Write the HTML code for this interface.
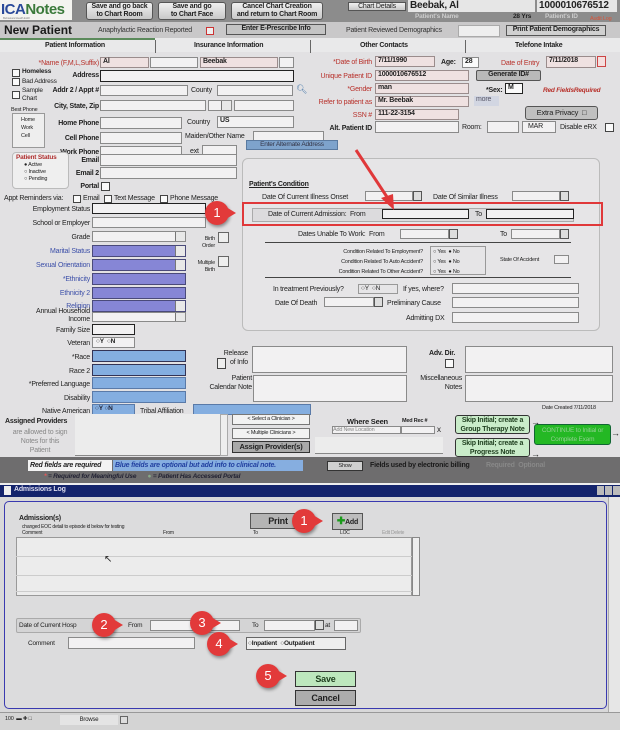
<!DOCTYPE html>
<html><head><meta charset="utf-8"><style>
*{box-sizing:border-box;margin:0;padding:0}
body{width:620px;height:730px;overflow:hidden;position:relative;background:#e2e1e3;font-family:"Liberation Sans",Arial,sans-serif;font-size:7px;letter-spacing:-0.2px;color:#222}
.a{position:absolute;white-space:nowrap}
.r{text-align:right}
.b{font-weight:bold}
.red{color:#b8312b}
.blu{color:#3c4fa8}
.in{position:absolute;background:#f2f1f2;border:1px solid #8a8a8a}
.dk{border:1px solid #222}
.pk{position:absolute;background:#efe1e1;border:1px solid #9a8c8c}
.pu{position:absolute;background:#8686d6;border:1px solid #4a4a7a}
.bl{position:absolute;background:#84aee0;border:1px solid #5a7aa8}
.btn{position:absolute;background:linear-gradient(#f0f0f0,#c8c8c8);border:1px solid #555;border-radius:3px;text-align:center;font-weight:bold;font-size:7px;line-height:8px;white-space:nowrap}
.cb{position:absolute;width:8px;height:8px;background:#fafafa;border:1px solid #444}
.sel:after{content:"";position:absolute;right:0;top:0;bottom:0;width:9px;border-left:1px solid #777;background:#e8e8e8}
.cal{position:absolute;width:9px;height:10px;border:1px solid #555;background:#ddd}
.badge{position:absolute;width:24px;height:24px;border-radius:50%;background:#e23a3a;color:#fff;font-size:13px;text-align:center;line-height:24px;box-shadow:1px 2px 3px rgba(0,0,0,.4);letter-spacing:0}
.badge:after{content:"";position:absolute;right:-7px;top:6px;border-left:10px solid #e23a3a;border-top:6px solid transparent;border-bottom:6px solid transparent}
.gbtn{position:absolute;background:#c9ecc9;border:1px solid #333;border-radius:3px;text-align:center;font-weight:bold;font-size:7px;line-height:9px;color:#1d3d1d;white-space:nowrap}
</style></head><body>

<!-- top bar -->
<div class="a" style="left:0;top:0;width:620px;height:22px;background:#8c8c8c"></div>
<div class="a" style="left:0;top:0;width:72px;height:20px;background:#f4f4f0"></div>
<div class="a b" style="left:1px;top:1px;font-size:15px;color:#3b7a3b;letter-spacing:-0.5px"><span style="color:#2a4a9a">ICA</span>Notes</div>
<div class="a" style="left:3px;top:16px;font-size:3px;color:#888">Behavioral Health EHR</div>
<div class="btn" style="left:86px;top:2px;width:67px;height:18px">Save and go back<br>to Chart Room</div>
<div class="btn" style="left:158px;top:2px;width:68px;height:18px">Save and go<br>to Chart Face</div>
<div class="btn" style="left:231px;top:2px;width:92px;height:18px">Cancel Chart Creation<br>and return to Chart Room</div>
<div class="btn" style="left:348px;top:2px;width:58px;height:9px;font-weight:normal;line-height:7px;border-radius:0">Chart Details</div>
<div class="a b" style="left:408px;top:0;width:127px;height:12px;background:#e6e6e6;font-size:10px;padding-left:2px;line-height:12px">Beebak, Al</div>
<div class="a b" style="left:537px;top:0;width:80px;height:12px;background:#e6e6e6;font-size:10px;padding-left:2px;line-height:12px">1000010676512</div>
<div class="a b" style="left:415px;top:13px;color:#ccc;font-size:6.5px">Patient's Name</div>
<div class="a b" style="left:513px;top:13px;font-size:6.5px">28 Yrs</div>
<div class="a b" style="left:545px;top:13px;color:#ccc;font-size:6.5px">Patient's ID</div>
<div class="a" style="left:590px;top:16px;color:#d9553a;font-size:5.5px">Audit Log</div>

<!-- row 2 -->
<div class="a" style="left:0;top:22px;width:620px;height:16px;background:#c9c8c9"></div>
<div class="a b" style="left:4px;top:23px;font-size:12px;color:#1a1a1a;letter-spacing:0">New Patient</div>
<div class="a" style="left:98px;top:27px;color:#333">Anaphylactic Reaction Reported</div>
<div class="a" style="left:206px;top:27px;width:8px;height:8px;border:1px solid #c33;background:#eee"></div>
<div class="btn" style="left:226px;top:24px;width:100px;height:11px;border-radius:0;background:#c4c4c4">Enter E-Prescribe Info</div>
<div class="a" style="left:346px;top:27px;color:#333">Patient Reviewed Demographics</div>
<div class="a" style="left:458px;top:25px;width:42px;height:12px;background:#eee;border:1px solid #aaa"></div>
<div class="btn" style="left:506px;top:25px;width:100px;height:11px;border-radius:0;background:#d0d0d0">Print Patient Demographics</div>

<!-- tabs -->
<div class="a" style="left:0;top:38px;width:620px;height:14px;background:#e9e9ea"></div>
<div class="a" style="left:0;top:38px;width:155px;height:2px;background:#5b8a5b"></div>
<div class="a" style="left:155px;top:40px;width:1px;height:13px;background:#666"></div>
<div class="a" style="left:310px;top:40px;width:1px;height:13px;background:#666"></div>
<div class="a" style="left:465px;top:40px;width:1px;height:13px;background:#666"></div>
<div class="a b" style="left:45px;top:42px">Patient Information</div>
<div class="a b" style="left:194px;top:42px">Insurance Information</div>
<div class="a b" style="left:360px;top:42px">Other Contacts</div>
<div class="a b" style="left:515px;top:42px">Telefone Intake</div>

<!-- left column -->
<div class="a r red" style="left:0;top:60px;width:99px">*Name (F,M,L,Suffix)</div>
<div class="pk" style="left:100px;top:57px;width:49px;height:11px"><span class="b" style="padding-left:2px">Al</span></div>
<div class="in" style="left:150px;top:57px;width:48px;height:11px"></div>
<div class="pk" style="left:200px;top:57px;width:78px;height:11px"><span class="b" style="padding-left:2px">Beebak</span></div>
<div class="in" style="left:279px;top:57px;width:15px;height:11px"></div>
<div class="cb" style="left:12px;top:69px"></div><div class="a b" style="left:22px;top:68px;font-size:6.5px">Homeless</div>
<div class="cb" style="left:12px;top:78px"></div><div class="a" style="left:22px;top:78px;font-size:6.5px">Bad Address</div>
<div class="a r b" style="left:0;top:72px;width:99px">Address</div>
<div class="in dk" style="left:100px;top:70px;width:194px;height:12px"></div>
<div class="cb" style="left:12px;top:91px"></div><div class="a" style="left:22px;top:87px;font-size:6.5px;line-height:8px">Sample<br>Chart</div>
<div class="a r b" style="left:0;top:87px;width:99px">Addr 2 / Appt #</div>
<div class="in" style="left:100px;top:85px;width:88px;height:11px"></div>
<div class="a" style="left:191px;top:87px">County</div>
<div class="in" style="left:217px;top:85px;width:76px;height:11px"></div>
<div class="a" style="left:296px;top:84px;color:#47a;font-size:9px">&#x1F50D;&#xFE0E;</div>
<div class="a" style="left:11px;top:107px;font-size:5.5px">Best Phone</div>
<div class="a" style="left:12px;top:113px;width:33px;height:35px;border:1px solid #999;background:#eee;font-size:5.5px;line-height:8px;padding:2px 0 0 8px">Home<br>Work<br>Cell</div>
<div class="a r b" style="left:0;top:103px;width:99px">City, State, Zip</div>
<div class="in" style="left:100px;top:100px;width:106px;height:11px"></div>
<div class="in sel" style="left:208px;top:100px;width:24px;height:11px"></div>
<div class="in" style="left:234px;top:100px;width:60px;height:11px"></div>
<div class="a r b" style="left:0;top:120px;width:99px">Home Phone</div>
<div class="in" style="left:100px;top:117px;width:82px;height:12px"></div>
<div class="a" style="left:187px;top:119px">Country</div>
<div class="in" style="left:217px;top:116px;width:77px;height:12px"><span class="b" style="padding-left:2px">US</span></div>
<div class="a r b" style="left:0;top:135px;width:99px">Cell Phone</div>
<div class="in" style="left:100px;top:132px;width:82px;height:12px"></div>
<div class="a" style="left:185px;top:133px">Maiden/Other Name</div>
<div class="in" style="left:253px;top:131px;width:71px;height:12px"></div>
<div class="a r b" style="left:0;top:149px;width:99px">Work Phone</div>
<div class="in" style="left:100px;top:146px;width:82px;height:12px"></div>
<div class="a" style="left:190px;top:148px">ext</div>
<div class="in" style="left:202px;top:145px;width:35px;height:12px"></div>
<div class="a" style="left:246px;top:140px;width:92px;height:10px;background:#7ea3cc;border:1px solid #5a7aa0;font-size:6.5px;text-align:center;line-height:8px;color:#334">Enter Alternate Address</div>
<div class="a" style="left:12px;top:152px;width:57px;height:37px;border:1px solid #bbb;border-radius:4px;background:#efefef"></div>
<div class="a b" style="left:16px;top:154px;color:#b03030;font-size:6.5px">Patient Status</div>
<div class="a" style="left:24px;top:162px;font-size:5.5px;line-height:7px">&#9679; Active<br>&#9675; Inactive<br>&#9675; Pending</div>
<div class="a r b" style="left:0;top:157px;width:99px">Email</div>
<div class="in" style="left:100px;top:154px;width:137px;height:12px"></div>
<div class="a r b" style="left:0;top:170px;width:99px">Email 2</div>
<div class="in" style="left:100px;top:167px;width:137px;height:12px"></div>
<div class="a r b" style="left:0;top:183px;width:99px">Portal</div>
<div class="cb" style="left:101px;top:182px;width:9px;height:9px"></div>
<div class="a" style="left:4px;top:195px">Appt Reminders via:</div>
<div class="cb" style="left:73px;top:195px"></div><div class="a" style="left:83px;top:195px">Email</div>
<div class="cb" style="left:104px;top:195px"></div><div class="a" style="left:114px;top:195px">Text Message</div>
<div class="cb" style="left:160px;top:195px"></div><div class="a" style="left:170px;top:195px">Phone Message</div>

<div class="a r" style="left:0;top:206px;width:90px">Employment Status</div>
<div class="in dk" style="left:92px;top:203px;width:114px;height:11px"></div>
<div class="a r" style="left:0;top:220px;width:90px">School or Employer</div>
<div class="in" style="left:92px;top:217px;width:114px;height:11px"></div>
<div class="a r" style="left:0;top:234px;width:90px">Grade</div>
<div class="in sel" style="left:92px;top:231px;width:94px;height:11px"></div>
<div class="a r" style="left:190px;top:236px;width:25px;font-size:5.5px;line-height:7px">Birth<br>Order</div>
<div class="a" style="left:218px;top:232px;width:11px;height:11px;border:1px solid #666;background:#eee"></div>
<div class="a r blu" style="left:0;top:248px;width:90px">Marital Status</div>
<div class="pu sel" style="left:92px;top:245px;width:94px;height:12px"></div>
<div class="a r blu" style="left:0;top:262px;width:90px">Sexual Orientation</div>
<div class="pu sel" style="left:92px;top:259px;width:94px;height:12px"></div>
<div class="a r" style="left:190px;top:260px;width:25px;font-size:5.5px;line-height:7px">Multiple<br>Birth</div>
<div class="a" style="left:218px;top:256px;width:11px;height:11px;border:1px solid #666;background:#eee"></div>
<div class="a r blu" style="left:0;top:276px;width:90px">*Ethnicity</div>
<div class="pu" style="left:92px;top:273px;width:94px;height:12px"></div>
<div class="a r blu" style="left:0;top:290px;width:90px">Ethnicity 2</div>
<div class="pu" style="left:92px;top:287px;width:94px;height:12px"></div>
<div class="a r blu" style="left:0;top:303px;width:90px">Religion</div>
<div class="pu sel" style="left:92px;top:300px;width:94px;height:12px"></div>
<div class="a r" style="left:0;top:308px;width:90px;line-height:8px">Annual Household<br>Income</div>
<div class="in sel" style="left:92px;top:312px;width:94px;height:10px"></div>
<div class="a r" style="left:0;top:327px;width:90px">Family Size</div>
<div class="in dk" style="left:92px;top:324px;width:43px;height:11px"></div>
<div class="a r" style="left:0;top:340px;width:90px">Veteran</div>
<div class="in" style="left:92px;top:337px;width:43px;height:11px;font-size:6.5px;font-weight:bold;padding-left:3px">&#9675;Y &nbsp;&#9675;N</div>
<div class="a r" style="left:0;top:354px;width:90px">*Race</div>
<div class="bl" style="left:92px;top:350px;width:94px;height:12px;border-color:#335"></div>
<div class="a r" style="left:0;top:368px;width:90px">Race 2</div>
<div class="bl" style="left:92px;top:364px;width:94px;height:12px;border-color:#335"></div>
<div class="a r" style="left:0;top:381px;width:90px">*Preferred Language</div>
<div class="bl" style="left:92px;top:377px;width:94px;height:12px"></div>
<div class="a r" style="left:0;top:395px;width:90px">Disability</div>
<div class="bl" style="left:92px;top:391px;width:94px;height:12px"></div>
<div class="a r" style="left:0;top:408px;width:90px">Native American</div>
<div class="bl" style="left:92px;top:404px;width:43px;height:11px;font-size:6.5px;font-weight:bold;padding-left:2px;color:#223">&#9675;Y &#9675;N</div>
<div class="a" style="left:140px;top:408px">Tribal Affiliation</div>
<div class="bl" style="left:193px;top:404px;width:118px;height:11px"></div>

<!-- right column -->
<div class="a r red" style="left:280px;top:59px;width:92px">*Date of Birth</div>
<div class="pk" style="left:375px;top:56px;width:60px;height:11px"><span class="b" style="padding-left:2px">7/11/1990</span></div>
<div class="a b" style="left:441px;top:59px">Age:</div>
<div class="in" style="left:462px;top:57px;width:17px;height:11px;background:#fafafa"><span class="b" style="padding-left:2px">28</span></div>
<div class="a red" style="left:501px;top:60px">Date of Entry</div>
<div class="pk" style="left:546px;top:56px;width:50px;height:12px"><span class="b" style="padding-left:2px">7/11/2018</span></div>
<div class="a" style="left:597px;top:56px;width:9px;height:11px;border:1px solid #c44;background:#f5dede"></div>
<div class="a r red" style="left:280px;top:73px;width:92px">Unique Patient ID</div>
<div class="pk" style="left:375px;top:70px;width:94px;height:11px"><span class="b" style="padding-left:2px">1000010676512</span></div>
<div class="btn" style="left:476px;top:70px;width:65px;height:11px;background:#b9b9b9;border-radius:2px">Generate ID#</div>
<div class="a r red" style="left:280px;top:86px;width:92px">*Gender</div>
<div class="pk" style="left:375px;top:83px;width:94px;height:11px"><span class="b" style="padding-left:2px">man</span></div>
<div class="a b" style="left:486px;top:87px">*Sex:</div>
<div class="in dk" style="left:505px;top:83px;width:18px;height:11px;background:#fafafa"><span class="b" style="padding-left:2px">M</span></div>
<div class="a red b" style="left:543px;top:87px;font-style:italic;font-size:6.5px">Red FieldsRequired</div>
<div class="a r red" style="left:280px;top:99px;width:92px">Refer to patient as</div>
<div class="pk" style="left:375px;top:96px;width:94px;height:11px"><span class="b" style="padding-left:2px">Mr. Beebak</span></div>
<div class="a" style="left:474px;top:96px;width:25px;height:10px;background:#d2d6e2;color:#556;padding-left:2px">more</div>
<div class="a r red" style="left:280px;top:112px;width:92px">SSN #</div>
<div class="pk" style="left:375px;top:109px;width:84px;height:11px"><span class="b" style="padding-left:2px">111-22-3154</span></div>
<div class="btn" style="left:525px;top:106px;width:73px;height:14px;background:#c0c0c0;font-weight:normal;line-height:12px;font-size:7.5px">Extra Privacy &nbsp;&#9633;</div>
<div class="a r b" style="left:280px;top:125px;width:92px">Alt. Patient ID</div>
<div class="in" style="left:375px;top:121px;width:84px;height:12px"></div>
<div class="a" style="left:462px;top:124px">Room:</div>
<div class="in" style="left:487px;top:121px;width:32px;height:12px"></div>
<div class="in" style="left:522px;top:121px;width:34px;height:12px;padding-left:5px;line-height:10px">MAR</div>
<div class="a" style="left:560px;top:124px">Disable eRX</div>
<div class="cb" style="left:605px;top:123px;width:9px;height:9px"></div>

<!-- patient's condition -->
<div class="a" style="left:242px;top:158px;width:358px;height:173px;border:1px solid #bbb;border-radius:6px;background:#e6e5e7"></div>
<div class="a b" style="left:249px;top:181px;text-decoration:underline">Patient's Condition</div>
<div class="a" style="left:262px;top:194px">Date Of Current Illness Onset</div>
<div class="in" style="left:365px;top:191px;width:48px;height:10px"></div><div class="cal" style="left:413px;top:191px"></div>
<div class="a" style="left:433px;top:194px">Date Of Similar Illness</div>
<div class="in" style="left:512px;top:191px;width:48px;height:10px"></div><div class="cal" style="left:560px;top:191px"></div>
<div class="a" style="left:252px;top:208px;width:322px;height:14px;border:1px solid #aaa;background:#dcdbdd"></div>
<div class="a" style="left:268px;top:211px">Date of Current Admission:&nbsp; From</div>
<div class="in" style="left:382px;top:209px;width:87px;height:10px;border:1.5px solid #222"></div>
<div class="a" style="left:475px;top:211px">To</div>
<div class="in" style="left:486px;top:209px;width:88px;height:10px;border:1.5px solid #222"></div>
<div class="a" style="left:242px;top:202px;width:361px;height:24px;border:2px solid #e0383a"></div>
<div class="a" style="left:298px;top:231px">Dates Unable To Work:&nbsp; From</div>
<div class="in" style="left:400px;top:229px;width:49px;height:10px"></div><div class="cal" style="left:449px;top:229px"></div>
<div class="a" style="left:500px;top:231px">To</div>
<div class="in" style="left:511px;top:229px;width:49px;height:10px"></div><div class="cal" style="left:560px;top:229px"></div>
<div class="a" style="left:265px;top:242px;width:306px;height:1px;background:#444"></div>
<div class="a r" style="left:300px;top:247px;width:123px;font-size:5.5px;line-height:10px">Condition Related To Employment?<br>Condition Related To Auto Accident?<br>Condition Related To Other Accident?</div>
<div class="a" style="left:430px;top:246px;width:56px;height:29px;border:1px solid #999;font-size:5.5px;line-height:10px;padding-left:2px">&#9675; Yes &nbsp;&#9679; No<br>&#9675; Yes &nbsp;&#9679; No<br>&#9675; Yes &nbsp;&#9679; No</div>
<div class="a" style="left:500px;top:257px;font-size:5.5px">State Of Accident</div>
<div class="in" style="left:554px;top:255px;width:15px;height:9px"></div>
<div class="a" style="left:265px;top:277px;width:306px;height:1px;background:#444"></div>
<div class="a" style="left:273px;top:286px">In treatment Previously?</div>
<div class="a" style="left:358px;top:284px;width:40px;height:10px;border:1px solid #999;font-size:6.5px;padding-left:2px">&#9675;Y &nbsp;&#9675;N</div>
<div class="a" style="left:403px;top:286px">If yes, where?</div>
<div class="in" style="left:452px;top:283px;width:127px;height:11px"></div>
<div class="a" style="left:275px;top:300px">Date Of Death</div>
<div class="in" style="left:324px;top:297px;width:50px;height:10px"></div><div class="cal" style="left:374px;top:297px"></div>
<div class="a" style="left:387px;top:300px">Preliminary Cause</div>
<div class="in" style="left:452px;top:297px;width:127px;height:11px"></div>
<div class="a" style="left:406px;top:315px">Admitting DX</div>
<div class="in" style="left:452px;top:312px;width:127px;height:11px"></div>

<!-- arrow -->
<svg class="a" style="left:0;top:0" width="620" height="240"><line x1="356" y1="150" x2="389" y2="200" stroke="#e0383a" stroke-width="3"/><polygon points="394,210 381,198 393,194" fill="#e0383a"/></svg>
<div class="badge" style="left:205px;top:201px">1</div>

<!-- notes -->
<div class="a r" style="left:200px;top:349px;width:48px;line-height:9px">Release<br>of Info</div>
<div class="a" style="left:217px;top:358px;width:9px;height:11px;border:1px solid #444;background:#eee"></div>
<div class="in" style="left:252px;top:346px;width:155px;height:27px"></div>
<div class="a b" style="left:429px;top:350px">Adv. Dir.</div>
<div class="cb" style="left:445px;top:359px;width:9px;height:9px"></div>
<div class="in" style="left:465px;top:346px;width:148px;height:27px"></div>
<div class="a r" style="left:200px;top:374px;width:52px;line-height:9px">Patient<br>Calendar Note</div>
<div class="in" style="left:253px;top:375px;width:154px;height:27px"></div>
<div class="a r" style="left:405px;top:374px;width:57px;line-height:9px">Miscellaneous<br>Notes</div>
<div class="in" style="left:465px;top:375px;width:148px;height:27px"></div>
<div class="a" style="left:542px;top:405px;font-size:5.5px">Date Created 7/11/2018</div>

<!-- providers -->
<div class="a b" style="left:5px;top:418px">Assigned Providers</div>
<div class="a" style="left:5px;top:428px;width:70px;text-align:center;color:#888;line-height:9px">are allowed to sign<br>Notes for this<br>Patient</div>
<div class="a" style="left:75px;top:414px;width:145px;height:42px;background:#ececec;border-bottom:1px solid #888"></div>
<div class="a" style="left:220px;top:414px;width:8px;height:42px;background:#eee;border:1px solid #aaa"></div>
<div class="a" style="left:232px;top:414px;width:78px;height:11px;border:1px solid #777;background:#f2f2f2;font-size:5.5px;text-align:center;line-height:9px">&lt; Select a Clinician &gt;</div>
<div class="a" style="left:232px;top:428px;width:78px;height:11px;border:1px solid #777;background:#f2f2f2;font-size:5.5px;text-align:center;line-height:9px">&lt; Multiple Clinicians &gt;</div>
<div class="btn" style="left:232px;top:441px;width:78px;height:12px;background:#a9a9a9;border-radius:0;border:1.5px solid #333;font-size:7.5px;line-height:9px">Assign Provider(s)</div>
<div class="a b" style="left:347px;top:417px;font-size:7.5px">Where Seen</div>
<div class="a b" style="left:402px;top:418px;font-size:5.5px">Med Rec #</div>
<div class="in" style="left:332px;top:426px;width:69px;height:8px;font-size:5.5px;color:#888;line-height:6px">Add New Location</div>
<div class="in" style="left:401px;top:426px;width:34px;height:8px"></div>
<div class="a" style="left:437px;top:425px;font-size:8px">x</div>
<div class="a" style="left:315px;top:437px;width:128px;height:17px;border-bottom:1px solid #888;background:#ececec"></div>
<div class="gbtn" style="left:455px;top:415px;width:75px;height:19px">Skip Initial; create a<br>Group Therapy Note</div>
<div class="gbtn" style="left:455px;top:438px;width:75px;height:19px">Skip Initial; create a<br>Progress Note</div>
<div class="a" style="left:534px;top:424px;width:77px;height:21px;background:#24b824;border:1px solid #163;border-radius:3px;text-align:center;color:#8fd08f;font-size:6.5px;line-height:9px;padding-top:1px">CONTINUE to Initial or<br>Complete Exam</div>
<div class="a" style="left:531px;top:417px;font-size:9px">&rarr;</div>
<div class="a" style="left:531px;top:449px;font-size:9px">&rarr;</div>
<div class="a" style="left:611px;top:428px;font-size:9px">&rarr;</div>

<!-- gray bar -->
<div class="a" style="left:0;top:457px;width:620px;height:26px;background:#6e6d6e"></div>
<div class="a b" style="left:28px;top:460px;width:84px;height:11px;background:#f3f3f3;font-style:italic;padding-left:2px;line-height:11px">Red fields are required</div>
<div class="a b" style="left:113px;top:460px;width:190px;height:11px;background:#86aee0;font-style:italic;color:#2240a0;padding-left:2px;line-height:11px">Blue fields are optional but add info to clinical note.</div>
<div class="a b" style="left:44px;top:473px;font-style:italic;color:#223;font-size:6.5px"><span style="color:#e55">*</span> = Required for Meaningful Use &nbsp; &nbsp; &nbsp; <span style="color:#8a8">&#9679;</span> = Patient Has Accessed Portal</div>
<div class="a" style="left:327px;top:461px;width:36px;height:10px;background:#cfcfcf;border:1px solid #333;font-size:5.5px;text-align:center;line-height:8px">Show</div>
<div class="a b" style="left:370px;top:462px;color:#1a1a1a">Fields used by electronic billing</div>
<div class="a b" style="left:486px;top:462px;color:#888">Required &nbsp;Optional</div>
<div class="a" style="left:0;top:483px;width:620px;height:2px;background:#eee"></div>

<!-- Admissions log -->
<div class="a" style="left:0;top:485px;width:620px;height:12px;background:#14246c"></div>
<div class="a" style="left:4px;top:486px;width:7px;height:9px;background:#eee"></div>
<div class="a b" style="left:14px;top:486px;color:#dde;font-size:7px">Admissions Log</div>
<div class="a" style="left:597px;top:486px;width:7px;height:9px;background:#bbb"></div>
<div class="a" style="left:605px;top:486px;width:7px;height:9px;background:#bbb"></div>
<div class="a" style="left:613px;top:486px;width:7px;height:9px;background:#bbb"></div>
<div class="a" style="left:0;top:497px;width:620px;height:233px;background:#d8d8d9"></div>
<div class="a" style="left:4px;top:501px;width:603px;height:208px;border:1.5px solid #3a3ab0;border-radius:5px;background:#dcdcdd"></div>
<div class="a" style="left:608px;top:497px;width:12px;height:215px;background:#e6e6e6;border-left:1px solid #aaa"></div>
<div class="a b" style="left:19px;top:515px;font-size:7px">Admission(s)</div>
<div class="a" style="left:22px;top:524px;font-size:5px">changed EOC detail to episode id below for testing</div>
<div class="a" style="left:22px;top:530px;font-size:5px">Comment</div>
<div class="a" style="left:163px;top:530px;font-size:5px">From</div>
<div class="a" style="left:253px;top:530px;font-size:5px">To</div>
<div class="a" style="left:340px;top:530px;font-size:5px">LOC</div>
<div class="a" style="left:382px;top:530px;font-size:5px;color:#999">Edit Delete</div>
<div class="btn" style="left:250px;top:513px;width:56px;height:16px;border-radius:0;background:#b4b4b4;font-size:9px;line-height:14px">Print</div>
<div class="btn" style="left:332px;top:513px;width:31px;height:17px;border-radius:0;background:#bdbdbd;font-size:7px;line-height:15px"><span style="color:#1a9a1a;font-size:10px">&#10010;</span>Add</div>
<div class="badge" style="left:292px;top:509px">1</div>
<div class="a" style="left:16px;top:537px;width:396px;height:59px;border:1px solid #999;background:#ececec"></div>
<div class="a" style="left:16px;top:556px;width:396px;height:1px;background:#ccc"></div>
<div class="a" style="left:16px;top:575px;width:396px;height:1px;background:#ccc"></div>
<div class="a" style="left:16px;top:591px;width:396px;height:1px;background:#ccc"></div>
<div class="a" style="left:412px;top:537px;width:8px;height:59px;background:#eee;border:1px solid #888"></div>
<div class="a" style="left:104px;top:554px;font-size:10px">&#8598;</div>
<div class="a" style="left:16px;top:618px;width:345px;height:15px;border:1px solid #aaa;border-radius:2px;background:#d4d4d5"></div>
<div class="a" style="left:19px;top:622px;font-size:6.5px">Date of Current Hosp</div>
<div class="a" style="left:128px;top:622px;font-size:6.5px">From</div>
<div class="in" style="left:150px;top:620px;width:90px;height:11px"></div>
<div class="a" style="left:252px;top:622px;font-size:6.5px">To</div>
<div class="in" style="left:264px;top:620px;width:51px;height:11px"></div><div class="cal" style="left:315px;top:620px"></div>
<div class="a" style="left:325px;top:622px;font-size:6.5px">at</div>
<div class="in" style="left:334px;top:620px;width:24px;height:11px"></div>
<div class="a" style="left:28px;top:640px;font-size:6.5px">Comment</div>
<div class="in" style="left:68px;top:637px;width:127px;height:12px"></div>
<div class="a" style="left:246px;top:637px;width:100px;height:13px;border:1px solid #666;background:#eee;font-size:6.5px;font-weight:bold;line-height:11px;padding-left:1px">&#9675;Inpatient &nbsp;&#9675;Outpatient</div>
<div class="badge" style="left:92px;top:613px">2</div>
<div class="badge" style="left:190px;top:611px">3</div>
<div class="badge" style="left:207px;top:632px">4</div>
<div class="gbtn" style="left:295px;top:671px;width:61px;height:16px;background:#bde7bd;font-size:9px;line-height:14px;border-radius:0;border:1.5px solid #333">Save</div>
<div class="btn" style="left:295px;top:690px;width:61px;height:16px;background:#acacac;font-size:9px;line-height:14px;border-radius:0;border:1.5px solid #333">Cancel</div>
<div class="badge" style="left:256px;top:664px">5</div>

<!-- status bar -->
<div class="a" style="left:0;top:712px;width:620px;height:18px;background:#d4d4d4;border-top:1px solid #999"></div>
<div class="a" style="left:5px;top:716px;font-size:5.5px">100 &nbsp;&#9644; &#10010; &#9633;</div>
<div class="a" style="left:60px;top:715px;width:58px;height:10px;background:#e4e4e4;font-size:6px;text-align:center;line-height:10px">Browse</div>
<div class="a" style="left:120px;top:716px;width:8px;height:8px;border:1px solid #666;background:#ddd"></div>
</body></html>
